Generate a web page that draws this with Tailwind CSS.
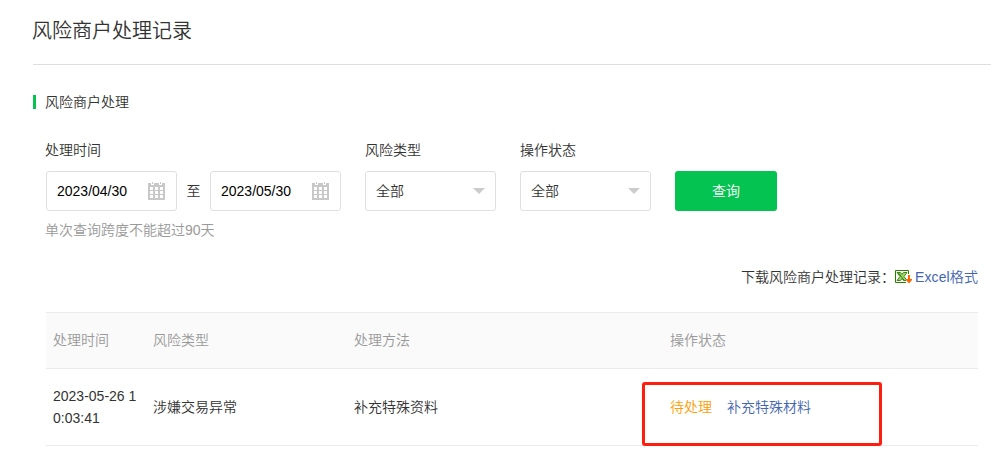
<!DOCTYPE html>
<html lang="zh-CN">
<head>
  <meta charset="UTF-8" />
  <meta name="viewport" content="width=device-width, initial-scale=1" />
  <title>风险商户处理记录</title>
  <script src="https://cdn.jsdelivr.net/npm/@tailwindcss/browser@4"></script>
</head>
<body class="bg-white h-[462px] overflow-hidden font-['Liberation_Sans','Noto_Sans_CJK_SC',sans-serif] font-[350] text-sm leading-[22px] text-[#333]">
  <!-- Page title -->
  <header class="ml-[33px] mr-[14px] h-[65px] border-b border-[#dfdfdf]">
    <h1 class="-ml-px pt-[17px] text-[20px] leading-[28px]">风险商户处理记录</h1>
  </header>

  <main class="pl-[33px] pr-[27px] pt-[26px]">
    <h2 class="flex items-center gap-[9px]">
      <span class="w-[3px] h-[14px] bg-[#04c351]"></span>
      风险商户处理
    </h2>

    <!-- Filters -->
    <form class="ml-[13px] mt-[26px] flex">
      <div class="w-[295px]">
        <div class="-ml-px">处理时间</div>
        <div class="mt-[10px] flex items-center">
          <div class="w-[131px] h-10 flex items-center justify-between border border-[#dfdfdf] rounded-[3px] pl-[10px] pr-[11px] text-black">
            <span>2023/04/30</span>
            <svg class="w-[17px] h-[18px]" viewBox="0 0 17 18">
              <path fill="#c8c8c8" fill-rule="evenodd" d="M0 1h3v2h3V1h5v2h3V1h3v17H0zM2 5v3h3V5zM7 5v3h3V5zM12 5v3h3V5zM2 9v3h3V9zM7 9v3h3V9zM12 9v3h3V9zM2 13v3h3v-3zM7 13v3h3v-3zM12 13v3h3v-3z" />
              <path fill="#c8c8c8" d="M4 0h1v2H4zM12 0h1v2h-1z" />
            </svg>
          </div>
          <span class="w-[33px] text-center">至</span>
          <div class="w-[131px] h-10 flex items-center justify-between border border-[#dfdfdf] rounded-[3px] pl-[10px] pr-[11px] text-black">
            <span>2023/05/30</span>
            <svg class="w-[17px] h-[18px]" viewBox="0 0 17 18">
              <path fill="#c8c8c8" fill-rule="evenodd" d="M0 1h3v2h3V1h5v2h3V1h3v17H0zM2 5v3h3V5zM7 5v3h3V5zM12 5v3h3V5zM2 9v3h3V9zM7 9v3h3V9zM12 9v3h3V9zM2 13v3h3v-3zM7 13v3h3v-3zM12 13v3h3v-3z" />
              <path fill="#c8c8c8" d="M4 0h1v2H4zM12 0h1v2h-1z" />
            </svg>
          </div>
        </div>
        <p class="-ml-px mt-2 text-[#999]">单次查询跨度不能超过90天</p>
      </div>

      <div class="ml-6 w-[131px]">
        <div>风险类型</div>
        <div class="mt-[10px] h-10 flex items-center justify-between border border-[#dfdfdf] rounded-[3px] pl-[10px] pr-[10px]">
          <span>全部</span>
          <svg class="w-3 h-[6px]" viewBox="0 0 12 6"><path fill="#ccc" d="M0 0h12L6 6z" /></svg>
        </div>
      </div>

      <div class="ml-6 w-[131px]">
        <div>操作状态</div>
        <div class="mt-[10px] h-10 flex items-center justify-between border border-[#dfdfdf] rounded-[3px] pl-[10px] pr-[10px]">
          <span>全部</span>
          <svg class="w-3 h-[6px]" viewBox="0 0 12 6"><path fill="#ccc" d="M0 0h12L6 6z" /></svg>
        </div>
      </div>

      <button type="button" class="ml-6 mt-8 w-[102px] h-10 rounded-[3px] bg-[#04c351] text-white">查询</button>
    </form>

    <!-- Download -->
    <div class="mt-[25px] flex items-center justify-end">
      <span>下载风险商户处理记录：</span>
      <svg class="w-[17px] h-[14px] mr-[3px]" viewBox="0 0 17 14">
        <path fill="#fff" stroke="#2b8000" d="M.5.5h13v12H.5z" />
        <path fill="#a5d86e" stroke="#2b8000" stroke-width=".9" d="M2 2.500h3.500l1.500 2 1.500-2H12L9 6.500l3 4H8.500l-1.500-2-1.500 2H2l3-4z" />
        <path stroke="#2b8000" d="M3.500 3l5.500 7" />
        <path fill="#fff" d="M12 4h5v10h-5zM11 9h2v5h-2z" />
        <path fill="#f60" d="M13 5h2v4h2v1l-2.500 3h-1L11 10V9h2z" />
      </svg>
      <a class="tracking-[0.1px] text-[#4466b0]">Excel格式</a>
    </div>

    <!-- Records -->
    <div class="relative ml-[13px] mt-6">
      <table class="w-full table-fixed text-left">
        <colgroup>
          <col class="w-[100px]" />
          <col class="w-[200px]" />
          <col class="w-[316px]" />
          <col />
        </colgroup>
        <thead>
          <tr class="h-14 bg-[#fafafa] border-t border-b border-[#ebebeb] text-[#999]">
            <th class="pl-[7px] pb-[2px] font-[350]">处理时间</th>
            <th class="pl-[7px] pb-[2px] font-[350]">风险类型</th>
            <th class="pl-2 pb-[2px] font-[350]">处理方法</th>
            <th class="pl-2 pb-[2px] font-[350]">操作状态</th>
          </tr>
        </thead>
        <tbody>
          <tr class="h-[77px] border-b border-[#ebebeb]">
            <td class="pl-[7px] pr-2 break-all">2023-05-26 10:03:41</td>
            <td class="pl-[7px]">涉嫌交易异常</td>
            <td class="pl-2">补充特殊资料</td>
            <td class="pl-2">
              <span class="text-[#ff9c00]">待处理</span><a class="ml-[15px] text-[#4466b0]">补充特殊材料</a>
            </td>
          </tr>
        </tbody>
      </table>
      <div class="absolute left-[596px] top-[70px] w-[240px] h-16 border-3 border-[#ff1d0f] rounded-[3px]"></div>
    </div>
  </main>
</body>
</html>
